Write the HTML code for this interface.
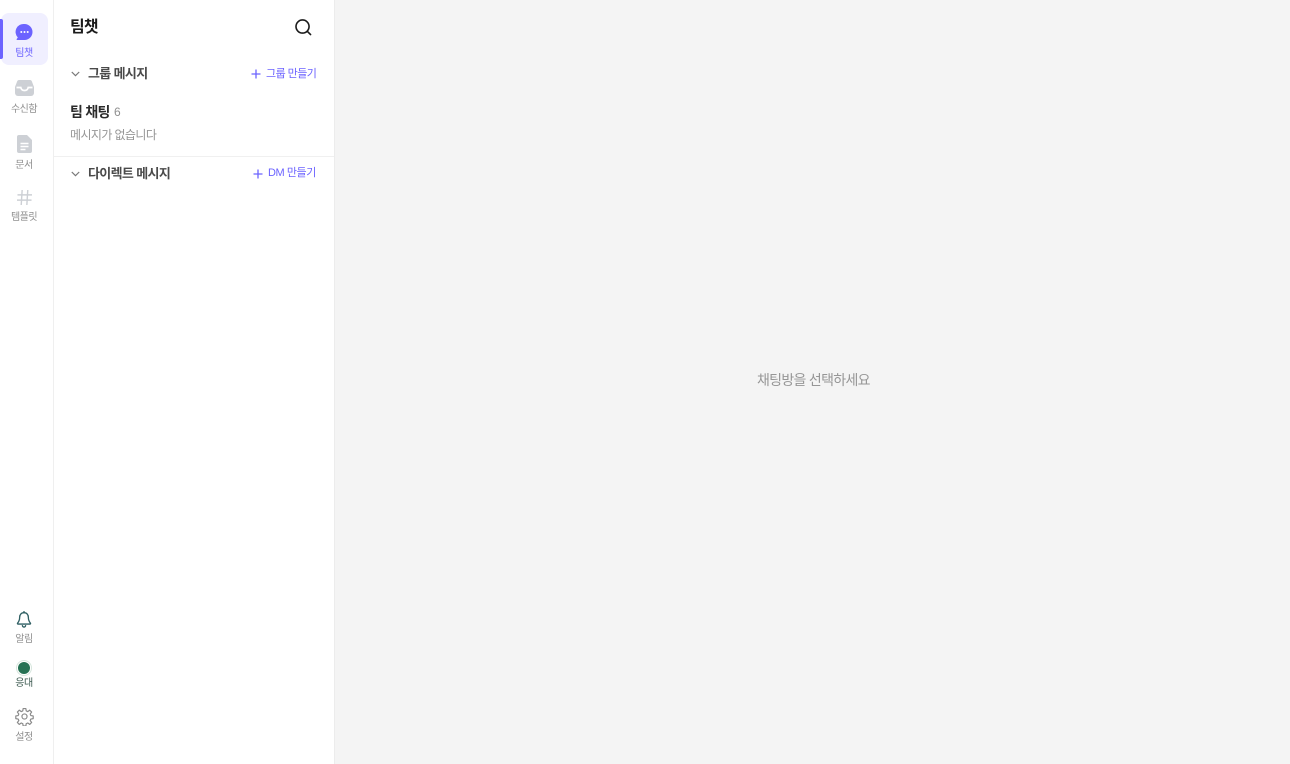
<!DOCTYPE html>
<html lang="ko">
<head>
<meta charset="utf-8">
<style>
html,body{margin:0;padding:0;width:1290px;height:764px;overflow:hidden;background:#fff;font-family:"Liberation Sans","Noto Sans CJK KR",sans-serif;}
.a{position:absolute;white-space:nowrap;line-height:1;letter-spacing:-.05em;}
svg{position:absolute;display:block;}
.nav{font-size:10px;color:#8f8f8f;width:54px;text-align:center;left:-3px;}
</style>
</head>
<body>
<div class="a" style="left:53px;top:0;width:1px;height:764px;background:#efefef"></div>
<div class="a" style="left:334px;top:0;width:956px;height:764px;background:#f4f4f4;border-left:1px solid #ececec;box-sizing:border-box"></div>

<div class="a" style="left:1px;top:13px;width:47px;height:52px;background:#f0efff;border-radius:8px"></div>
<div class="a" style="left:0;top:19px;width:3px;height:40px;background:#6c63ff;border-radius:0 2px 2px 0"></div>
<svg style="left:15px;top:23px" width="18" height="18" viewBox="0 0 18 18"><path d="M9.500 1a8 8 0 0 1 0 16H2.200a.6.6 0 0 1-.5-1l1.100-1.500A8 8 0 0 1 9.500 1z" fill="#6c63ff"/><circle cx="6.300" cy="9" r="1" fill="#fff"/><circle cx="9.500" cy="9" r="1" fill="#fff"/><circle cx="12.700" cy="9" r="1" fill="#fff"/></svg>
<div class="a nav" style="top:49px;color:#6c63ff">팀챗</div>

<svg style="left:15px;top:80px" width="19" height="16" viewBox="0 0 19 16"><path d="M4 0h11a2 2 0 0 1 1.800 1.200L19 7v6a3 3 0 0 1-3 3H3a3 3 0 0 1-3-3V7l2.200-5.800A2 2 0 0 1 4 0z" fill="#cdd0d5"/><path d="M1.500 7.500h4.300c.4 2 1.800 3 3.700 3s3.300-1 3.700-3h4.300" fill="none" stroke="#fff" stroke-width="1.700"/></svg>
<div class="a nav" style="top:105px">수신함</div>

<svg style="left:17px;top:135px" width="15" height="18" viewBox="0 0 15 18"><path d="M2 0h8l5 5v11a2 2 0 0 1-2 2H2a2 2 0 0 1-2-2V2a2 2 0 0 1 2-2z" fill="#cdd0d5"/><path d="M3.500 8.500h8M3.500 11.500h8M3.500 14.500h5" stroke="#fff" stroke-width="1.400"/></svg>
<div class="a nav" style="top:161px">문서</div>

<svg style="left:16px;top:190px" width="17" height="15" viewBox="0 0 17 16"><path d="M6 0 5 16M12 0l-1 16M1 5.200h15.500M.5 10.800H16" stroke="#cdd0d5" stroke-width="1.500" fill="none"/></svg>
<div class="a nav" style="top:213px">템플릿</div>

<svg style="left:16px;top:611px" width="16" height="17" viewBox="0 0 16 18"><path d="M8 1.800c-3 0-4.600 2.200-4.600 4.800 0 3.200-.8 4.600-2.200 6.300-.3.400-.1.900.4.900h12.800c.5 0 .7-.5.400-.9-1.400-1.700-2.200-3.100-2.200-6.300 0-2.600-1.600-4.800-4.600-4.800z" fill="none" stroke="#2f5f63" stroke-width="1.400"/><path d="M8 .5v1.300M6.300 15.500c.3 1 1 1.500 1.700 1.500s1.400-.5 1.700-1.500" fill="none" stroke="#2f5f63" stroke-width="1.400" stroke-linecap="round"/></svg>
<div class="a nav" style="top:635px">알림</div>

<div class="a" style="left:16px;top:660px;width:14px;height:14px;border:1px solid #d6e6dd;border-radius:50%"></div>
<div class="a" style="left:18px;top:662px;width:12px;height:12px;background:#267254;border-radius:50%"></div>
<div class="a nav" style="top:679px;color:#3c5a50">응대</div>

<svg style="left:15px;top:707px" width="19" height="19" viewBox="0 0 24 24" fill="none" stroke="#8a8a8a" stroke-width="1.500" stroke-linejoin="round"><circle cx="12" cy="12" r="3.200"/><path d="M10.300 2h3.400l.5 3 1.900.8 2.500-1.800 2.400 2.400-1.800 2.500.8 1.900 3 .5v3.400l-3 .5-.8 1.900 1.800 2.500-2.400 2.400-2.500-1.800-1.900.8-.5 3h-3.400l-.5-3-1.900-.8-2.500 1.800-2.400-2.400 1.800-2.500-.8-1.900-3-.5v-3.400l3-.5.8-1.900-1.800-2.500 2.400-2.400 2.500 1.800 1.900-.8z"/></svg>
<div class="a nav" style="top:733px">설정</div>

<div class="a" style="left:70px;top:20px;font-size:16px;font-weight:700;color:#1c1c1c">팀챗</div>
<svg style="left:294px;top:18px" width="18" height="18" viewBox="0 0 19 19" fill="none" stroke="#1c1c1c" stroke-width="1.700" stroke-linecap="round"><circle cx="9" cy="9" r="6.900"/><path d="M14 14l3.500 3.500"/></svg>

<svg style="left:71px;top:71px" width="9" height="6" viewBox="0 0 9 6" fill="none" stroke="#777" stroke-width="1.200"><path d="M.8 1l3.700 3.700L8.200 1"/></svg>
<div class="a" style="left:88px;top:67px;font-size:13px;font-weight:700;color:#4a4a4a">그룹 메시지</div>
<svg style="left:251px;top:69px" width="10" height="10" viewBox="0 0 10 10" stroke="#6c63ff" stroke-width="1.300"><path d="M5 .5v9M.5 5h9"/></svg>
<div class="a" style="left:266px;top:69px;font-size:11px;color:#6c63ff">그룹 만들기</div>

<div class="a" style="left:70px;top:105px;font-size:14px;font-weight:700;color:#2b2b2b">팀 채팅</div>
<div class="a" style="left:114px;top:106px;font-size:12px;color:#8f8f8f">6</div>
<div class="a" style="left:70px;top:129px;font-size:12px;color:#969696">메시지가 없습니다</div>

<div class="a" style="left:54px;top:156px;width:280px;height:1px;background:#f0f0f0"></div>

<svg style="left:71px;top:171px" width="9" height="6" viewBox="0 0 9 6" fill="none" stroke="#777" stroke-width="1.200"><path d="M.8 1l3.700 3.700L8.200 1"/></svg>
<div class="a" style="left:88px;top:167px;font-size:13px;font-weight:700;color:#4a4a4a">다이렉트 메시지</div>
<svg style="left:253px;top:169px" width="10" height="10" viewBox="0 0 10 10" stroke="#6c63ff" stroke-width="1.300"><path d="M5 .5v9M.5 5h9"/></svg>
<div class="a" style="left:268px;top:168px;font-size:11px;color:#6c63ff;letter-spacing:-.04em">DM 만들기</div>

<div class="a" style="left:757px;top:373px;font-size:14px;color:#969696">채팅방을 선택하세요</div>
</body>
</html>
